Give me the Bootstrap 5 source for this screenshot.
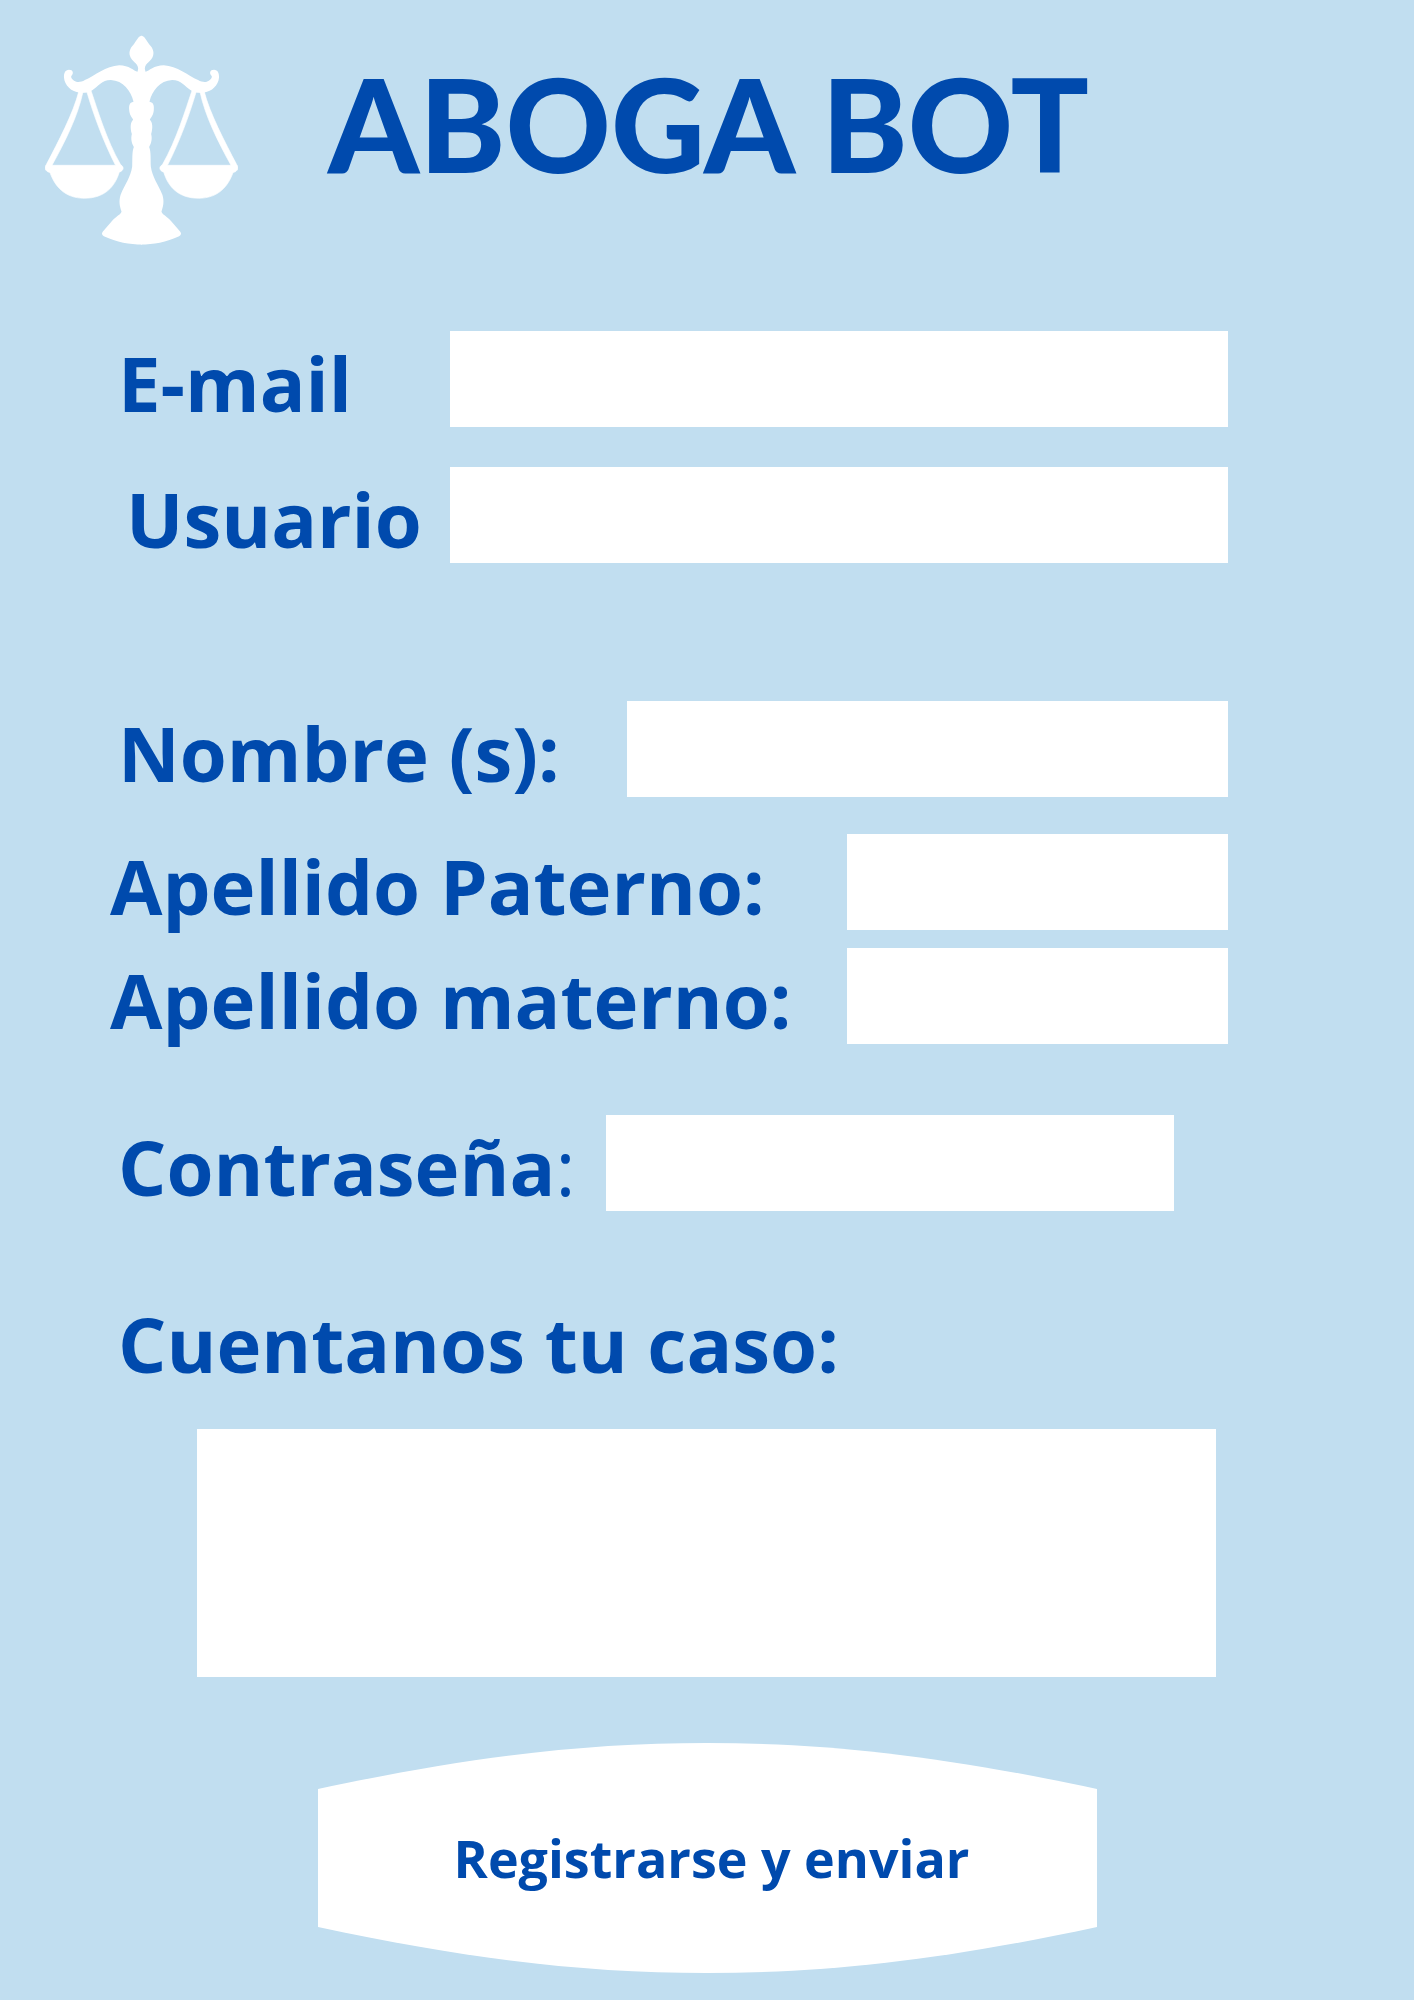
<!DOCTYPE html>
<html lang="es">
<head>
<meta charset="utf-8">
<meta name="viewport" content="width=device-width, initial-scale=1">
<title>Aboga Bot</title>
<link href="https://cdn.jsdelivr.net/npm/bootstrap@5.3.0/dist/css/bootstrap.min.css" rel="stylesheet">
<style>
  :root { --ink: #004aad; --sky: #c1def0; }
  body { background: var(--sky); color: var(--ink); font-family: "Open Sans", sans-serif; }
  .page-head { padding: 35px 45px 0; gap: 90px; margin-bottom: 86px; }
  .scales { width: 193px; height: 210px; }
  .brand { font-family: Lato, sans-serif; font-weight: 900; font-size: 130px; line-height: 160px; padding-top: 8px; }
  .signup { padding: 0 186px 27px 110px; }
  .field-label { font-size: 76px; line-height: 90px; font-weight: 700; padding-top: 7px; white-space: nowrap; }
  .w-short { width: 340px; }
  .w-medium { width: 517px; }
  .w-pass { width: 496px; }
  .w-long { width: 737px; }
  .signup .form-control { border: 0; border-radius: 0; background: #fff; color: var(--ink); font-size: 40px; min-width: 0; }
  .signup input.form-control { height: 96px; }
  .signup .field-row { height: 96px; }
  .pass-box { max-width: 568px; }
  .gap-a { margin-bottom: 40px; }
  .gap-b { margin-bottom: 138px; }
  .gap-c { margin-bottom: 37px; }
  .gap-d { margin-bottom: 18px; }
  .gap-e { margin-bottom: 71px; }
  .gap-f { margin-bottom: 81px; }
  .case-wrap { padding: 40px 12px 0 87px; margin-bottom: 66px; }
  .signup textarea.form-control { height: 248px; resize: none; }
  .send-wrap { padding: 0 131px 0 208px; }
  .send { height: 230px; border: 0; background: none; color: var(--ink); font-size: 52px; font-weight: 700; }
  .send svg { inset: 0; }
  @media (max-width: 1199px) {
    .page-head { flex-wrap: wrap; gap: 24px; margin-bottom: 40px; }
    .brand { font-size: 72px; line-height: 90px; }
    .signup { padding: 0 32px 27px; }
    .signup .field-row { flex-wrap: wrap; height: auto; }
    .field-label { font-size: 40px; line-height: 56px; width: 100%; white-space: normal; }
    .case-wrap, .send-wrap { padding: 16px 0 0; }
    .send { font-size: 32px; }
  }
</style>
</head>
<body>
<header class="page-head d-flex align-items-start">
  <svg class="scales flex-shrink-0" viewBox="45 45 580 630" fill="#fff" role="img" aria-label="Balanza">
    <defs>
      <g id="half">
        <path d="M337 47C325 47 322 60 312 72C298 86 298 98 300 106C304 124 325 128 325 146L323 155C312 152 298 135 268 135C228 138 195 165 165 180C155 186 145 187 139 185C130 182 122 175 124 168C132 160 130 149 117 149C106 149 101 160 102 172C104 196 124 214 146 217C160 220 178 218 188 210C205 200 215 180 243 180C280 182 303 212 311 245C298 247 297 258 298 270C299 285 306 292 310 299C302 306 300 322 306 342C302 358 306 370 312 381C306 395 308 420 307 440C303 470 285 495 272 525C266 545 270 560 275 575C272 585 260 588 245 605L219 635C214 641 216 645 222 649C260 667 300 674 337 674Z"/>
        <path fill-rule="evenodd" d="M147 213C130 280 85 365 49 434C42 442 44 454 60 458C75 500 105 535 163 535C225 535 255 500 268 457C284 450 282 440 272 434C230 360 203 270 183 211ZM159 216L171 216C190 280 218 360 257 436L66 436C105 365 143 290 159 216Z" stroke="#fff" stroke-width="2"/>
      </g>
    </defs>
    <use href="#half"/>
    <use href="#half" transform="translate(670 0) scale(-1 1)"/>
  </svg>
  <h1 class="brand mb-0">ABOGA BOT</h1>
</header>

<main>
  <form class="signup">
    <div class="field-row d-flex gap-a">
      <label class="field-label w-short ps-2 flex-shrink-0" for="email">E-mail</label>
      <input class="form-control flex-grow-1" type="email" id="email">
    </div>
    <div class="field-row d-flex gap-b">
      <label class="field-label w-short ps-3 flex-shrink-0" for="usuario">Usuario</label>
      <input class="form-control flex-grow-1" type="text" id="usuario">
    </div>
    <div class="field-row d-flex gap-c">
      <label class="field-label w-medium ps-2 flex-shrink-0" for="nombre">Nombre (s):</label>
      <input class="form-control flex-grow-1" type="text" id="nombre">
    </div>
    <div class="field-row d-flex gap-d">
      <label class="field-label w-long flex-shrink-0" for="paterno">Apellido Paterno:</label>
      <input class="form-control flex-grow-1" type="text" id="paterno">
    </div>
    <div class="field-row d-flex gap-e">
      <label class="field-label w-long flex-shrink-0" for="materno">Apellido materno:</label>
      <input class="form-control flex-grow-1" type="text" id="materno">
    </div>
    <div class="field-row d-flex gap-f">
      <label class="field-label w-pass ps-2 flex-shrink-0" for="clave">Contraseña<span class="fw-normal">:</span></label>
      <input class="form-control flex-grow-1 pass-box" type="password" id="clave">
    </div>
    <label class="field-label ps-2 d-block" for="caso">Cuentanos tu caso:</label>
    <div class="case-wrap">
      <textarea class="form-control" id="caso"></textarea>
    </div>
    <div class="send-wrap">
      <button class="send w-100 position-relative p-0" type="submit">
        <svg class="position-absolute w-100 h-100" viewBox="0 0 779 230" preserveAspectRatio="none" fill="#fff" aria-hidden="true"><path d="M0 46C150 14 265 0 389 0C514 0 629 14 779 46V184C629 216 514 230 389 230C265 230 150 216 0 184Z"/></svg>
        <span class="position-relative ps-2">Registrarse y enviar</span>
      </button>
    </div>
  </form>
</main>
<script src="https://cdn.jsdelivr.net/npm/bootstrap@5.3.0/dist/js/bootstrap.bundle.min.js"></script>
</body>
</html>
